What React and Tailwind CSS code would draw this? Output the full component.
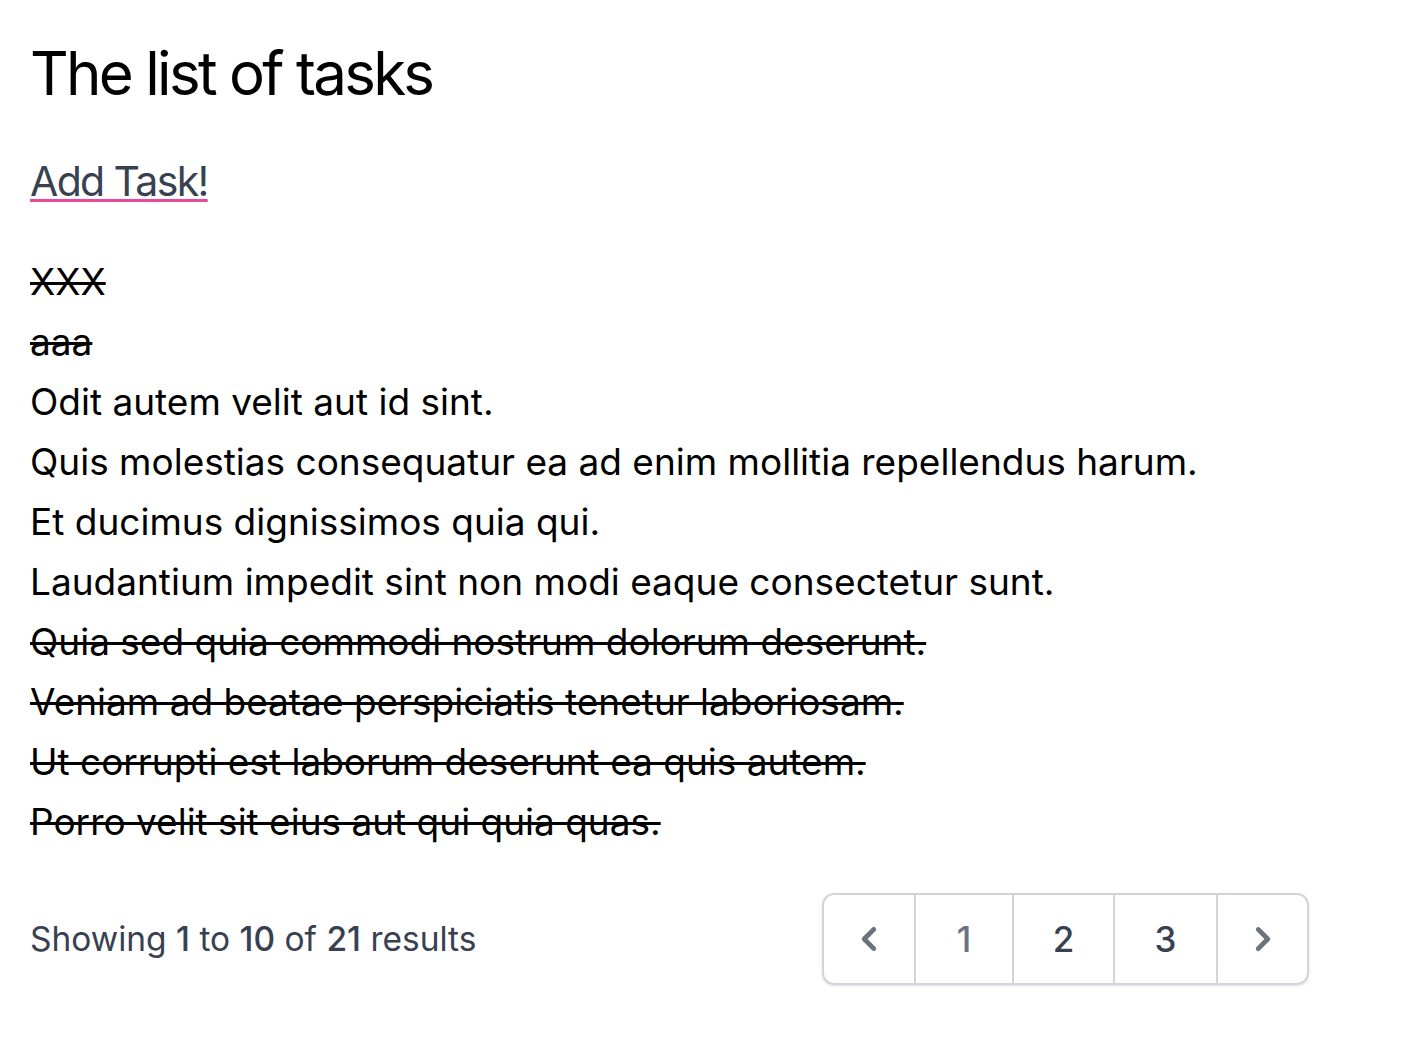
export default function App() {
  const tasks = [
    { title: "XXX", done: true },
    { title: "aaa", done: true },
    { title: "Odit autem velit aut id sint.", done: false },
    { title: "Quis molestias consequatur ea ad enim mollitia repellendus harum.", done: false },
    { title: "Et ducimus dignissimos quia qui.", done: false },
    { title: "Laudantium impedit sint non modi eaque consectetur sunt.", done: false },
    { title: "Quia sed quia commodi nostrum dolorum deserunt.", done: true },
    { title: "Veniam ad beatae perspiciatis tenetur laboriosam.", done: true },
    { title: "Ut corrupti est laborum deserunt ea quis autem.", done: true },
    { title: "Porro velit sit eius aut qui quia quas.", done: true },
  ];

  return (
    <div className="min-h-screen bg-white pl-[30px] font-['Inter',sans-serif] text-black">
      <h1 className="pt-[43px] text-[60px] leading-none font-normal tracking-[-0.045em]">The list of tasks</h1>

      <div className="mt-[58px]">
        <a
          href="#"
          className="text-[41px] leading-none tracking-[-0.04em] text-[#374151] underline decoration-[#ec4899] decoration-[3px] underline-offset-[3px]"
        >
          Add Task!
        </a>
      </div>

      <div className="mt-[50px]">
        {tasks.map((task) => (
          <div
            key={task.title}
            className={`text-[37px] leading-[60px] ${task.done ? "line-through decoration-[3px]" : ""}`}
          >
            {task.title}
          </div>
        ))}
      </div>

      {/* pagination */}
      <nav className="mt-[41px] flex w-[1279px] items-center justify-between">
        <p className="text-[33.5px] leading-[40px] text-[#374151]">
          Showing <span className="font-medium">1</span> to <span className="font-medium">10</span> of{" "}
          <span className="font-medium">21</span> results
        </p>

        <div className="flex h-[92px] rounded-[12px] border-2 border-[#d1d5db] shadow-sm">
          <span className="flex w-[90px] items-center justify-center text-[#6b7280]">
            <svg className="h-[48px] w-[48px]" viewBox="0 0 20 20" fill="currentColor">
              <path
                fillRule="evenodd"
                d="M12.707 5.293a1 1 0 010 1.414L9.414 10l3.293 3.293a1 1 0 01-1.414 1.414l-4-4a1 1 0 010-1.414l4-4a1 1 0 011.414 0z"
                clipRule="evenodd"
              />
            </svg>
          </span>
          <span className="flex w-[98px] items-center justify-center border-l-2 border-[#d1d5db] text-[35px] font-medium text-[#6b7280]">1</span>
          <span className="flex w-[101px] items-center justify-center border-l-2 border-[#d1d5db] text-[35px] font-medium text-[#374151]">2</span>
          <span className="flex w-[103px] items-center justify-center border-l-2 border-[#d1d5db] text-[35px] font-medium text-[#374151]">3</span>
          <span className="flex w-[91px] items-center justify-center border-l-2 border-[#d1d5db] text-[#6b7280]">
            <svg className="h-[48px] w-[48px]" viewBox="0 0 20 20" fill="currentColor">
              <path
                fillRule="evenodd"
                d="M7.293 14.707a1 1 0 010-1.414L10.586 10 7.293 6.707a1 1 0 011.414-1.414l4 4a1 1 0 010 1.414l-4 4a1 1 0 01-1.414 0z"
                clipRule="evenodd"
              />
            </svg>
          </span>
        </div>
      </nav>
    </div>
  );
}
